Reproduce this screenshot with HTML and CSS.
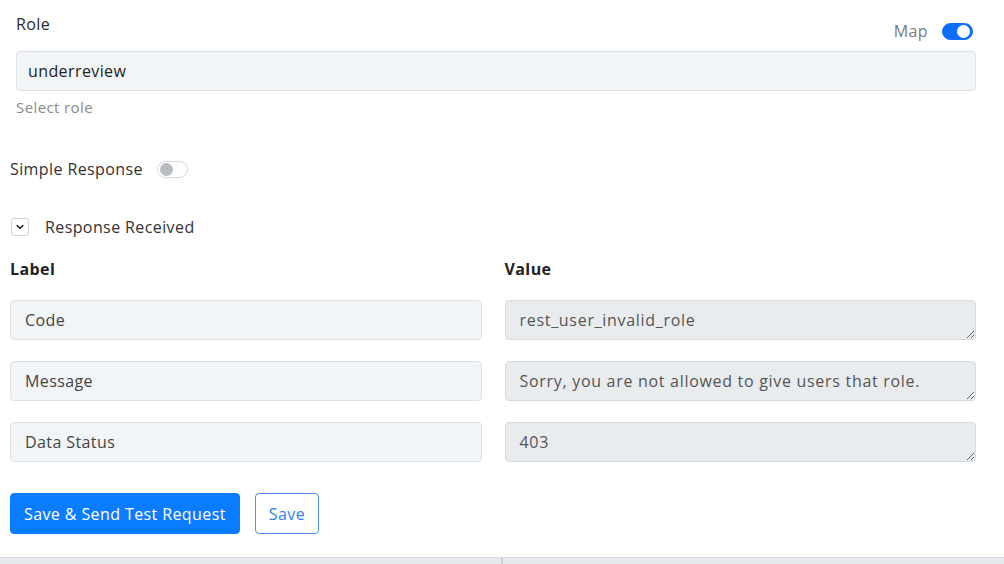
FILE: index.html
```html
<!DOCTYPE html>
<html lang="en">
<head>
    <meta charset="UTF-8">
    <meta name="viewport" content="width=device-width, initial-scale=1.0">
    <title>Response Mapping</title>
    <link rel="stylesheet" href="styles.css">
</head>
<body>
    <div class="panel">
        <div class="role-field">
            <div class="field-head">
                <label for="role">Role</label>
                <div class="map-switch">
                    <span>Map</span>
                    <span class="toggle on"></span>
                </div>
            </div>
            <input type="text" id="role" class="text-input" value="underreview">
            <div class="hint">Select role</div>
        </div>

        <div class="switch-row">
            <span>Simple Response</span>
            <span class="toggle"></span>
        </div>

        <div class="collapse-row">
            <span class="chevron-box">
                <svg width="10" height="10" viewBox="0 0 10 10"><path d="M2.2 3.6 5 6.4 7.8 3.6" fill="none" stroke="#333" stroke-width="1.6" stroke-linecap="round" stroke-linejoin="round"/></svg>
            </span>
            <span>Response Received</span>
        </div>

        <div class="mapping-grid">
            <div class="col-title">Label</div>
            <div class="col-title">Value</div>

            <input type="text" class="text-input" value="Code">
            <textarea class="value-box" rows="1" readonly>rest_user_invalid_role</textarea>

            <input type="text" class="text-input" value="Message">
            <textarea class="value-box" rows="1" readonly>Sorry, you are not allowed to give users that role.</textarea>

            <input type="text" class="text-input" value="Data Status">
            <textarea class="value-box" rows="1" readonly>403</textarea>
        </div>

        <div class="actions">
            <button class="btn btn-primary">Save &amp; Send Test Request</button>
            <button class="btn btn-outline">Save</button>
        </div>
    </div>

    <div class="table-strip">
        <div class="strip-cell"></div>
        <div class="strip-cell"></div>
    </div>
</body>
</html>
```

FILE: styles.css
```css
body {
    font-family: "Open Sans", "Liberation Sans", sans-serif;
    font-size: 16px;
    letter-spacing: 0.4px;
    color: #2b2b2b;
    background-color: #fff;
    margin: 0;
}

.panel {
    padding: 14px 28px 23px 10px;
}

.role-field {
    padding-left: 6px;
}

.field-head {
    display: flex;
    justify-content: space-between;
    align-items: flex-start;
    height: 37px;
}

.field-head label {
    line-height: 20px;
}

.map-switch {
    display: flex;
    align-items: center;
    gap: 14px;
    margin-top: 6px;
    margin-right: 3px;
    color: #7a7a7a;
}

.toggle {
    position: relative;
    display: inline-block;
    width: 31px;
    height: 17px;
    box-sizing: border-box;
    border: 1px solid #d3d6da;
    border-radius: 9px;
    background-color: #fff;
}

    .toggle::after {
        content: "";
        position: absolute;
        top: 1px;
        left: 2px;
        width: 13px;
        height: 13px;
        border-radius: 50%;
        background-color: #b8bcc1;
    }

    .toggle.on {
        background-color: #0d6efd;
        border-color: #0d6efd;
    }

        .toggle.on::after {
            left: auto;
            right: 2px;
            background-color: #fff;
        }

.text-input {
    display: block;
    width: 100%;
    height: 40px;
    box-sizing: border-box;
    padding: 0 14px;
    font: inherit;
    letter-spacing: inherit;
    color: #444;
    background-color: #f2f5f8;
    border: 1px solid #dde1e6;
    border-radius: 4px;
    outline: none;
}

.role-field .text-input {
    padding: 0 11px;
    color: #222;
}

.hint {
    margin-top: 6px;
    line-height: 20px;
    font-size: 15px;
    color: #8a8a8a;
}

.switch-row {
    display: flex;
    align-items: center;
    gap: 14px;
    margin-top: 40px;
    line-height: 24px;
    color: #333;
}

.collapse-row {
    display: flex;
    align-items: center;
    gap: 16px;
    margin-top: 34px;
    line-height: 24px;
    color: #333;
}

.chevron-box {
    display: flex;
    align-items: center;
    justify-content: center;
    width: 18px;
    height: 18px;
    box-sizing: border-box;
    margin-left: 1px;
    border: 1px solid #cfd3d8;
    border-radius: 3px;
}

.mapping-grid {
    display: grid;
    grid-template-columns: 1fr 1fr;
    column-gap: 23px;
    row-gap: 21px;
    margin-top: 20px;
}

.col-title {
    font-weight: bold;
    line-height: 20px;
    color: #222;
}

.value-box {
    display: block;
    width: 100%;
    height: 40px;
    box-sizing: border-box;
    padding: 8px 14px;
    font: inherit;
    letter-spacing: 0.7px;
    line-height: 22px;
    color: #555;
    background-color: #e9ecef;
    border: 1px solid #d6dade;
    border-radius: 4px;
    resize: vertical;
    overflow: hidden;
    outline: none;
}

.actions {
    display: flex;
    gap: 15px;
    margin-top: 31px;
}

.btn {
    height: 41px;
    padding: 0 13px;
    font: inherit;
    letter-spacing: inherit;
    border-radius: 4px;
    cursor: pointer;
}

.btn-primary {
    color: #fff;
    background-color: #0a7cff;
    border: 1px solid #0a7cff;
}

.btn-outline {
    color: #2f7ff0;
    background-color: #fff;
    border: 1px solid #4c8ff0;
}

.table-strip {
    display: flex;
    height: 7px;
    border-top: 1px solid #d9dde2;
    background-color: #e5e8ec;
}

.strip-cell {
    flex: 1;
}

    .strip-cell:first-child {
        border-right: 2px solid #cdd1d6;
    }
```
